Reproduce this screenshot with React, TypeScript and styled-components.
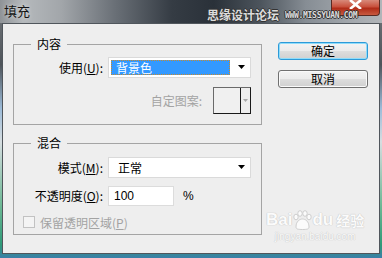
import React from "react"
import styled, { createGlobalStyle } from "styled-components"

const Global = createGlobalStyle`
  html, body {
    margin: 0;
    padding: 0;
    background: #2b3036;
  }
  body {
    width: 382px;
    height: 258px;
    overflow: hidden;
    font-family: "Liberation Sans", "Noto Sans CJK SC", sans-serif;
    font-size: 12px;
    color: #000;
  }
`

const Frame = styled.div`
  position: relative;
  width: 382px;
  height: 258px;
  display: flex;
  flex-direction: column;
  overflow: hidden;
  background: linear-gradient(
    to bottom,
    #767a7e 0%,
    #4e545a 25%,
    #9cbbd8 42%,
    #d6dde0 55%,
    #6cb894 80%,
    #2f9a78 95%,
    #3b7fa8 100%
  );
`

const TitleBar = styled.div`
  height: 23px;
  flex: none;
  display: flex;
  align-items: flex-start;
  background: linear-gradient(
    to right,
    #8f9397 0%,
    #b5b9bc 6%,
    #a2a6aa 16%,
    #6a7077 30%,
    #353c44 45%,
    #2a3139 56%,
    #4c545c 68%,
    #868d94 80%,
    #a3a8ad 92%,
    #b1b5b9 100%
  );
`

const Title = styled.div`
  padding: 3px 0 0 4px;
  font-family: "Noto Sans CJK SC", sans-serif;
  font-size: 13px;
  line-height: 16px;
  color: #141414;
  text-shadow: 0 0 4px rgba(255, 255, 255, 0.6);
`

const CloseButton = styled.div`
  margin: 0 2px 0 auto;
  width: 47px;
  height: 15px;
  border-radius: 0 0 4px 4px;
  border: 1px solid #5a2a22;
  border-top: none;
  background: linear-gradient(to bottom, #d88a7a 0%, #c8503c 45%, #b02c18 55%, #c85a40 100%);
  display: flex;
  justify-content: center;
  align-items: flex-start;
`

const Watermark = styled.div`
  position: absolute;
  left: 207px;
  top: 8px;
  display: flex;
  align-items: flex-end;
  gap: 6px;
  color: #dcdcdc;
  text-shadow: 1px 0 0 #333, -1px 0 0 #333, 0 1px 0 #333, 0 -1px 0 #333;
`

const WatermarkCn = styled.span`
  font-family: "Noto Sans CJK SC", sans-serif;
  font-size: 12px;
  font-weight: 700;
  line-height: 14px;
`

const WatermarkEn = styled.span`
  font-family: "DejaVu Sans Mono", monospace;
  font-size: 8px;
  font-weight: 700;
  line-height: 10px;
  letter-spacing: -0.3px;
  padding-bottom: 1px;
`

const Client = styled.div`
  flex: 1;
  margin: 0 2px 4px 2px;
  border: 1px solid #50565c;
  background: #eeeeee;
  display: flex;
  align-items: flex-start;
  padding: 13px 0 0 10px;
`

const LeftColumn = styled.div`
  width: 249px;
  display: flex;
  flex-direction: column;
  gap: 11px;
`

const Group = styled.fieldset<{ $top: number; $bottom: number }>`
  margin: 0;
  min-width: 0;
  border: 1px solid #a4a4a4;
  padding: ${({ $top }) => $top}px 9px ${({ $bottom }) => $bottom}px 0;
  display: flex;
  flex-direction: column;
`

const Legend = styled.legend`
  margin-left: 17px;
  padding: 0 6px;
  font-family: "Noto Sans CJK SC", sans-serif;
  font-size: 12px;
  line-height: 14px;
`

const Row = styled.div<{ $h: number; $gap?: number }>`
  display: flex;
  align-items: center;
  height: ${({ $h }) => $h}px;
  margin-top: ${({ $gap }) => $gap ?? 0}px;
`

const Label = styled.label<{ $disabled?: boolean }>`
  width: 89px;
  margin-right: 5px;
  text-align: right;
  white-space: nowrap;
  font-family: "Noto Sans CJK SC", sans-serif;
  font-size: 12px;
  line-height: 14px;
  color: ${({ $disabled }) => ($disabled ? "#a3a3a3" : "#000")};
`

const Select = styled.div`
  box-sizing: border-box;
  width: 143px;
  height: 100%;
  background: #fff;
  border: 1px solid #dadada;
  display: flex;
  align-items: center;
  padding: 2px 5px 2px 2px;
`

const SelectValue = styled.div<{ $focused?: boolean }>`
  flex: 1;
  height: 100%;
  box-sizing: border-box;
  display: flex;
  align-items: center;
  padding-left: ${({ $focused }) => ($focused ? 4 : 6)}px;
  font-family: "Noto Sans CJK SC", sans-serif;
  font-size: 12px;
  color: ${({ $focused }) => ($focused ? "#fff" : "#000")};
  background: ${({ $focused }) => ($focused ? "#3399ff" : "transparent")};
  border: 1px dotted ${({ $focused }) => ($focused ? "#c88a2c" : "transparent")};
  margin-right: 8px;
`

const PatternRow = styled(Row)`
  justify-content: flex-end;
  padding-right: 1px;
`

const PatternLabel = styled(Label)`
  width: auto;
  margin-right: 11px;
`

const PatternBox = styled.div`
  box-sizing: border-box;
  width: 38px;
  height: 27px;
  border: 1px solid #1a1a1a;
  border-top-color: #6a6a6a;
  border-left-color: #6a6a6a;
  display: flex;
`

const PatternSwatch = styled.div`
  width: 26px;
  border-right: 1px solid #1a1a1a;
  background: #f0f0f0;
`

const PatternArrow = styled.div`
  flex: 1;
  display: flex;
  align-items: center;
  justify-content: center;
`

const TextInput = styled.div`
  box-sizing: border-box;
  width: 66px;
  height: 100%;
  background: #fff;
  border: 1px solid #dcdcdc;
  display: flex;
  align-items: center;
  padding-left: 5px;
  font-size: 12px;
`

const Unit = styled.span`
  margin-left: 9px;
  font-size: 12px;
`

const Check = styled.div`
  box-sizing: border-box;
  width: 12px;
  height: 12px;
  margin-left: 9px;
  margin-right: 5px;
  border: 1px solid #c2c2c2;
  background: #f4f4f4;
`

const CheckLabel = styled.span`
  font-family: "Noto Sans CJK SC", sans-serif;
  font-size: 12px;
  color: #a3a3a3;
`

const ButtonColumn = styled.div`
  margin-left: 16px;
  padding-top: 5px;
  display: flex;
  flex-direction: column;
  gap: 10px;
`

const Button = styled.div<{ $default?: boolean }>`
  box-sizing: border-box;
  width: 90px;
  height: 18px;
  border-radius: 3px;
  border: 1px solid ${({ $default }) => ($default ? "#2c9ad8" : "#707070")};
  box-shadow: ${({ $default }) => ($default ? "inset 0 0 0 1px #8fdcfa" : "inset 0 0 0 1px #fafafa")};
  background: linear-gradient(to bottom, #f3f3f3 0%, #ebebeb 48%, #dddddd 52%, #d0d0d0 100%);
  display: flex;
  align-items: center;
  justify-content: center;
  font-family: "Noto Sans CJK SC", sans-serif;
  font-size: 12px;
  line-height: 14px;
`

const Baidu = styled.div`
  position: absolute;
  left: 266px;
  top: 210px;
  display: flex;
  flex-direction: column;
  align-items: center;
  color: #fbfbfb;
  text-shadow: 0 0 1px #c4c4c4, 0 0 1px #c4c4c4;
  pointer-events: none;
`

const BaiduLogo = styled.div`
  display: flex;
  align-items: flex-end;
  font-family: "Liberation Sans", sans-serif;
  font-weight: 700;
  font-size: 17px;
  line-height: 20px;
`

const BaiduCn = styled.span`
  margin-left: 3px;
  font-family: "Noto Sans CJK SC", sans-serif;
  font-size: 14px;
  line-height: 20px;
`

const BaiduUrl = styled.div`
  font-family: "Liberation Sans", sans-serif;
  font-size: 10px;
  line-height: 12px;
  margin-top: 1px;
`

const Arrow = ({ color = "#000", w = 7 }: { color?: string; w?: number }) => (
  <svg width={w} height={Math.ceil(w / 2) + 1} viewBox={`0 0 ${w} ${Math.ceil(w / 2) + 1}`}>
    <polygon points={`0,0 ${w},0 ${w / 2},${Math.ceil(w / 2)}`} fill={color} />
  </svg>
)

const App = () => {
  return (
    <>
      <Global />
      <Frame>
        <TitleBar>
          <Title>填充</Title>
          <CloseButton>
            <svg width="13" height="9" viewBox="0 0 13 9">
              <path d="M1 0 L12 9 M12 0 L1 9" stroke="#fff" strokeWidth="2.6" />
            </svg>
          </CloseButton>
        </TitleBar>
        <Watermark>
          <WatermarkCn>思缘设计论坛</WatermarkCn>
          <WatermarkEn>WWW.MISSYUAN.COM</WatermarkEn>
        </Watermark>

        <Client>
          <LeftColumn>
            <Group $top={6} $bottom={10}>
              <Legend>内容</Legend>
              <Row $h={21}>
                <Label>
                  使用(<u>U</u>):
                </Label>
                <Select>
                  <SelectValue $focused>背景色</SelectValue>
                  <Arrow />
                </Select>
              </Row>
              <PatternRow $h={27} $gap={9}>
                <PatternLabel $disabled>自定图案:</PatternLabel>
                <PatternBox>
                  <PatternSwatch />
                  <PatternArrow>
                    <Arrow color="#a8a8a8" w={5} />
                  </PatternArrow>
                </PatternBox>
              </PatternRow>
            </Group>

            <Group $top={7} $bottom={4}>
              <Legend>混合</Legend>
              <Row $h={21}>
                <Label>
                  模式(<u>M</u>):
                </Label>
                <Select>
                  <SelectValue>正常</SelectValue>
                  <Arrow />
                </Select>
              </Row>
              <Row $h={20} $gap={8}>
                <Label>
                  不透明度(<u>O</u>):
                </Label>
                <TextInput>100</TextInput>
                <Unit>%</Unit>
              </Row>
              <Row $h={16} $gap={8}>
                <Check />
                <CheckLabel>
                  保留透明区域(<u>P</u>)
                </CheckLabel>
              </Row>
            </Group>
          </LeftColumn>

          <ButtonColumn>
            <Button $default>确定</Button>
            <Button>取消</Button>
          </ButtonColumn>
        </Client>

        <Baidu>
          <BaiduLogo>
            Bai
            <svg width="20" height="20" viewBox="0 0 20 20">
              <g fill="#fbfbfb" stroke="#c4c4c4" strokeWidth="0.8">
                <ellipse cx="4" cy="7" rx="2.2" ry="2.8" />
                <ellipse cx="8" cy="3.5" rx="2.2" ry="2.8" />
                <ellipse cx="13" cy="3.5" rx="2.2" ry="2.8" />
                <ellipse cx="17" cy="7" rx="2.2" ry="2.8" />
                <path d="M4 17 C4 11 8 9 10.5 9 C13 9 17 11 17 17 C17 19 15 19.5 10.5 19.5 C6 19.5 4 19 4 17 Z" />
              </g>
            </svg>
            du
            <BaiduCn>经验</BaiduCn>
          </BaiduLogo>
          <BaiduUrl>jingyan.baidu.com</BaiduUrl>
        </Baidu>
      </Frame>
    </>
  )
}

export default App
